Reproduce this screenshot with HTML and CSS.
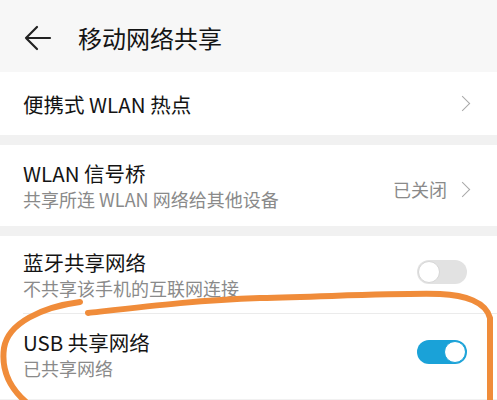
FILE: index.html
```html
<!DOCTYPE html>
<html lang="zh-CN">
<head>
  <meta charset="UTF-8">
  <meta name="viewport" content="width=device-width, initial-scale=1.0">
  <title>移动网络共享</title>
  <link rel="stylesheet" href="styles.css">
</head>
<body>
  <header class="topbar">
    <svg class="back" width="28" height="26" viewBox="0 0 28 26">
      <path d="M13 2 L2 13 L13 24 M2 13 H26" fill="none" stroke="#222" stroke-width="2.2" stroke-linecap="round" stroke-linejoin="round"/>
    </svg>
    <h1>移动网络共享</h1>
  </header>

  <section class="group">
    <div class="row row-single">
      <div class="text">
        <p class="title">便携式 WLAN 热点</p>
      </div>
      <span class="chevron"></span>
    </div>
  </section>

  <section class="group">
    <div class="row row-double">
      <div class="text">
        <p class="title">WLAN 信号桥</p>
        <p class="sub">共享所连 WLAN 网络给其他设备</p>
      </div>
      <span class="status">已关闭</span>
      <span class="chevron"></span>
    </div>
  </section>

  <section class="group group-last">
    <div class="row row-double divided">
      <div class="text">
        <p class="title">蓝牙共享网络</p>
        <p class="sub">不共享该手机的互联网连接</p>
      </div>
      <span class="switch"></span>
    </div>
    <div class="row row-double row-last">
      <div class="text">
        <p class="title">USB 共享网络</p>
        <p class="sub">已共享网络</p>
      </div>
      <span class="switch on"></span>
    </div>
  </section>

  <svg class="scribble" width="497" height="400" viewBox="0 0 497 400">
    <path d="M80 302 C42 307 8 323 4 348 C1 370 10 388 26 402" fill="none" stroke="#f08c3a" stroke-width="6" stroke-linecap="round"/>
    <path d="M88 313 C150 306 200 300 260 298 C340 296 400 293 440 294 C465 295 486 302 490 318 L490 402" fill="none" stroke="#f08c3a" stroke-width="6" stroke-linecap="round"/>
  </svg>
</body>
</html>
```

FILE: styles.css
```css
body {
  margin: 0;
  background: #f1f1f1;
  font-family: "Noto Sans CJK SC", "Noto Sans", sans-serif;
  color: #141414;
  overflow: hidden;
}
.topbar {
  height: 72px;
  background: #f7f7f7;
  display: flex;
  align-items: center;
  padding-left: 24px;
  box-sizing: border-box;
}
.back {
  margin-right: 26px;
  margin-top: 3px;
}
.topbar h1 {
  margin: 0;
  margin-top: 3px;
  font-size: 24px;
  font-weight: 400;
}
.group {
  background: #fff;
  margin-bottom: 10px;
}
.group-last {
  margin-bottom: 0;
}
.row {
  display: flex;
  align-items: center;
  padding: 0 26px 0 23px;
  box-sizing: border-box;
}
.row-single {
  height: 63px;
}
.row-double {
  height: 81px;
}
.row-last {
  height: 85px;
  padding-bottom: 4px;
}
.divided {
  height: 78px;
  border-bottom: 1px solid #ebebeb;
  margin-left: 23px;
  padding-left: 0;
}
.text {
  flex: 1;
}
.title {
  margin: 0;
  font-size: 20.5px;
  line-height: 28px;
}
.sub {
  margin: 0;
  font-size: 18px;
  line-height: 25px;
  color: #8a8a8a;
}
.status {
  font-size: 18px;
  color: #8a8a8a;
  margin-right: 10px;
  margin-top: 6px;
}
.row-double .chevron {
  margin-top: 8px;
}
.chevron {
  width: 10px;
  height: 10px;
  border-top: 1.6px solid #a8a8a8;
  border-right: 1.6px solid #a8a8a8;
  transform: rotate(45deg);
  margin-right: 3px;
}
.switch {
  position: relative;
  width: 50px;
  height: 24px;
  border-radius: 12px;
  background: #e2e2e2;
  margin-right: 4px;
  margin-bottom: 6px;
}
.switch::after {
  content: "";
  position: absolute;
  left: 1px;
  top: 1px;
  width: 20px;
  height: 20px;
  border-radius: 50%;
  background: #fff;
  border: 1px solid #d6d6d6;
}
.switch.on {
  background: #1aa2d8;
}
.switch.on::after {
  left: auto;
  right: 1px;
  border-color: #1aa2d8;
}
.scribble {
  position: absolute;
  left: 0;
  top: 0;
  pointer-events: none;
}
```
